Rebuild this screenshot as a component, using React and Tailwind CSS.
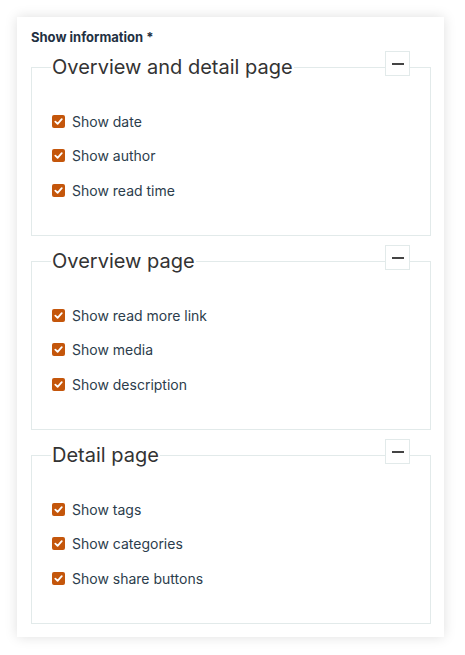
import React from 'react';

const groups = [
  { title: 'Overview and detail page', items: ['Show date', 'Show author', 'Show read time'] },
  { title: 'Overview page', items: ['Show read more link', 'Show media', 'Show description'] },
  { title: 'Detail page', items: ['Show tags', 'Show categories', 'Show share buttons'] },
];

const Check = ({ label }) => (
  <label className="flex items-center gap-[7px] h-5">
    <span className="w-[13px] h-[13px] rounded-[2px] bg-[#c4560b] flex items-center justify-center">
      <svg width="9" height="9" viewBox="0 0 10 10">
        <path d="M1.5 5.2 L4 7.6 L8.6 2.4" fill="none" stroke="#fff" strokeWidth="2" strokeLinecap="round" strokeLinejoin="round" />
      </svg>
    </span>
    <span className="text-[14px] text-[#2c3d4c]">{label}</span>
  </label>
);

const Group = ({ title, items }) => (
  <fieldset className="relative border border-[#e2eaea] pl-[19px] pr-5 pb-[35px]">
    <legend className="px-[1px] text-[20px] leading-6 text-[#333]">{title}</legend>
    <button className="absolute top-[-28px] right-[20px] w-[25px] h-[25px] bg-white border border-[#e2eaea] flex items-center justify-center">
      <span className="block w-3 h-[2px] bg-[#444]" />
    </button>
    <div className="flex flex-col gap-[14.5px] pt-[32px] pl-[1px]">
      {items.map((it) => (
        <Check key={it} label={it} />
      ))}
    </div>
  </fieldset>
);

export default function App() {
  return (
    <div className="min-h-screen bg-white pt-[17px] pl-[17px]" style={{ fontFamily: 'Inter, "Noto Sans", sans-serif' }}>
      <div className="w-[427px] bg-white shadow-[0_0_12px_rgba(0,0,0,0.13)] pt-[10px] pl-[14px] pr-[13px] pb-[13px]">
        <div className="text-[13px] font-bold leading-5 text-[#1f3142]">Show information *</div>
        <div className="flex flex-col gap-[13px] mt-2">
          {groups.map((g) => (
            <Group key={g.title} {...g} />
          ))}
        </div>
      </div>
    </div>
  );
}
